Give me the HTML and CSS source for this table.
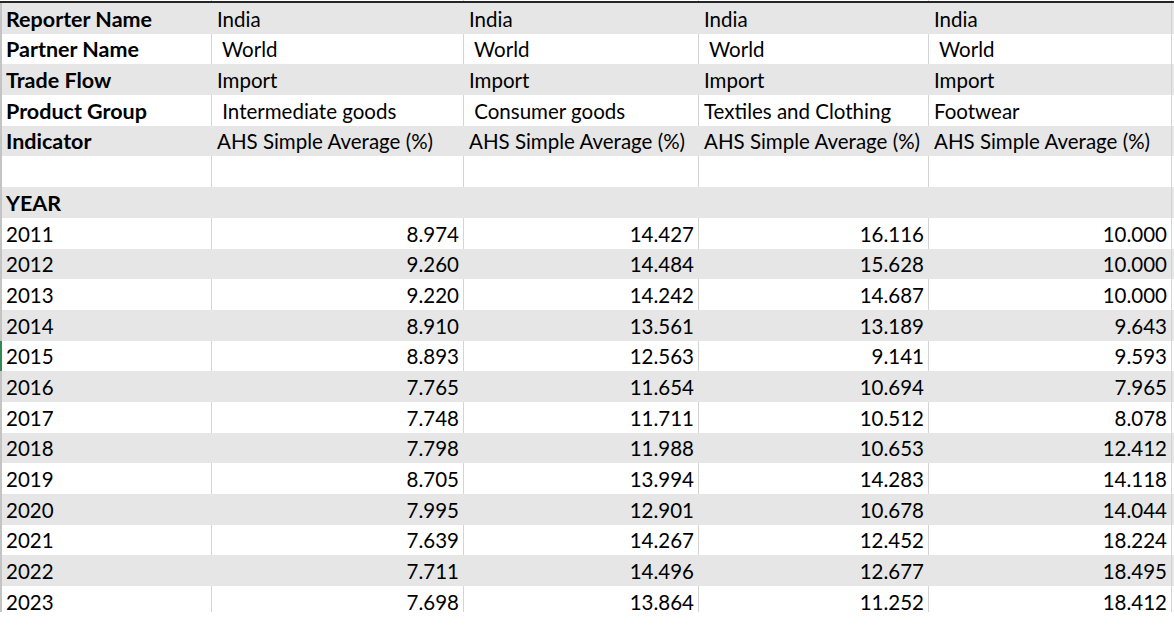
FILE: index.html
```html
<!DOCTYPE html>
<html lang="en">
<head>
<meta charset="utf-8">
<title>India AHS Simple Average</title>
<link rel="stylesheet" href="styles.css">
</head>
<body>
<div class="sheet">
  <div class="stub"><span></span><span></span><span></span><span></span><span></span></div>
  <div class="grid">
    <div class="row band"><div class="c lbl">Reporter Name</div><div class="c">India</div><div class="c">India</div><div class="c">India</div><div class="c">India</div></div>
    <div class="row"><div class="c lbl">Partner Name</div><div class="c"> World</div><div class="c"> World</div><div class="c"> World</div><div class="c"> World</div></div>
    <div class="row band"><div class="c lbl">Trade Flow</div><div class="c">Import</div><div class="c">Import</div><div class="c">Import</div><div class="c">Import</div></div>
    <div class="row"><div class="c lbl">Product Group</div><div class="c"> Intermediate goods</div><div class="c"> Consumer goods</div><div class="c">Textiles and Clothing</div><div class="c">Footwear</div></div>
    <div class="row band"><div class="c lbl">Indicator</div><div class="c">AHS Simple Average (%)</div><div class="c">AHS Simple Average (%)</div><div class="c">AHS Simple Average (%)</div><div class="c">AHS Simple Average (%)</div></div>
    <div class="row"><div class="c lbl"></div><div class="c"></div><div class="c"></div><div class="c"></div><div class="c"></div></div>
    <div class="row band"><div class="c lbl">YEAR</div><div class="c"></div><div class="c"></div><div class="c"></div><div class="c"></div></div>
    <div class="row"><div class="c">2011</div><div class="c n">8.974</div><div class="c n">14.427</div><div class="c n">16.116</div><div class="c n">10.000</div></div>
    <div class="row band"><div class="c">2012</div><div class="c n">9.260</div><div class="c n">14.484</div><div class="c n">15.628</div><div class="c n">10.000</div></div>
    <div class="row"><div class="c">2013</div><div class="c n">9.220</div><div class="c n">14.242</div><div class="c n">14.687</div><div class="c n">10.000</div></div>
    <div class="row band"><div class="c">2014</div><div class="c n">8.910</div><div class="c n">13.561</div><div class="c n">13.189</div><div class="c n">9.643</div></div>
    <div class="row sel"><div class="c">2015</div><div class="c n">8.893</div><div class="c n">12.563</div><div class="c n">9.141</div><div class="c n">9.593</div></div>
    <div class="row band"><div class="c">2016</div><div class="c n">7.765</div><div class="c n">11.654</div><div class="c n">10.694</div><div class="c n">7.965</div></div>
    <div class="row"><div class="c">2017</div><div class="c n">7.748</div><div class="c n">11.711</div><div class="c n">10.512</div><div class="c n">8.078</div></div>
    <div class="row band"><div class="c">2018</div><div class="c n">7.798</div><div class="c n">11.988</div><div class="c n">10.653</div><div class="c n">12.412</div></div>
    <div class="row"><div class="c">2019</div><div class="c n">8.705</div><div class="c n">13.994</div><div class="c n">14.283</div><div class="c n">14.118</div></div>
    <div class="row band"><div class="c">2020</div><div class="c n">7.995</div><div class="c n">12.901</div><div class="c n">10.678</div><div class="c n">14.044</div></div>
    <div class="row"><div class="c">2021</div><div class="c n">7.639</div><div class="c n">14.267</div><div class="c n">12.452</div><div class="c n">18.224</div></div>
    <div class="row band"><div class="c">2022</div><div class="c n">7.711</div><div class="c n">14.496</div><div class="c n">12.677</div><div class="c n">18.495</div></div>
    <div class="row"><div class="c">2023</div><div class="c n">7.698</div><div class="c n">13.864</div><div class="c n">11.252</div><div class="c n">18.412</div></div>
  </div>
</div>
</body>
</html>
```

FILE: styles.css
```css
* { box-sizing: border-box; }
html, body { margin: 0; padding: 0; background: #ffffff; }
body {
  font-family: Lato, "Liberation Sans", sans-serif;
  font-size: 20.5px;
  color: #000000;
  width: 1174px;
  height: 626px;
  overflow: hidden;
}
.sheet { width: 1174px; }
.stub {
  display: grid;
  grid-template-columns: 212px 252px 235px 230px 243px;
  height: 1px;
}
.stub span { border-right: 1px solid #d4d4d4; }
.grid {
  border-top: 2px solid #262626;
  height: 611px;
  overflow: hidden;
}
.row {
  display: grid;
  grid-template-columns: 210px 252px 235px 230px 243px;
  height: 30.7px;
  border-left: 2px solid #c4c4c4;
  width: 1174px;
  padding-right: 2px;
}
.row.sel { border-left-color: #2f8a52; }
.band { background: #e6e6e6; }
.c {
  display: flex;
  align-items: flex-end;
  white-space: pre;
  overflow: hidden;
  line-height: 20px;
  padding: 0 4px 5px 5px;
  border-right: 1px solid #d4d4d4;
}
.row .c:first-child { padding-left: 4px; }
.band .c { border-right-color: transparent; }
.band .c:last-child { border-right-color: #d4d4d4; }
.lbl { font-weight: 700; font-size: 21.5px; }
.n { justify-content: flex-end; }
```
